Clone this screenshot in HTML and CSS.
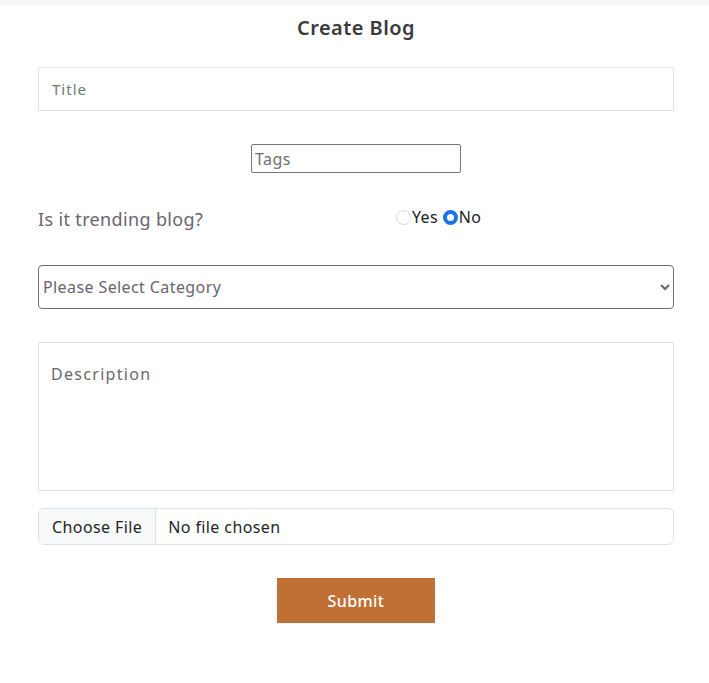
FILE: index.html
```html
<!DOCTYPE html>
<html lang="en">
<head>
<meta charset="utf-8">
<title>Create Blog</title>
<link rel="stylesheet" href="styles.css">
</head>
<body>
<div class="topbar"></div>
<main class="wrap">
  <h1 class="heading">Create Blog</h1>
  <form class="form">
    <input class="field title-field" type="text" placeholder="Title">
    <div class="tags-row">
      <input class="tags-field" type="text" placeholder="Tags">
    </div>
    <div class="trend-row">
      <span class="trend-label">Is it trending blog?</span>
      <div class="radios">
        <label class="radio-item"><input class="radio" type="radio" name="trend" value="yes">Yes</label>
        <label class="radio-item"><input class="radio" type="radio" name="trend" value="no" checked>No</label>
      </div>
    </div>
    <select class="select-field">
      <option>Please Select Category</option>
    </select>
    <textarea class="field desc-field" placeholder="Description"></textarea>
    <input class="file-field" type="file">
    <div class="submit-row">
      <button class="submit-btn" type="button">Submit</button>
    </div>
  </form>
</main>
</body>
</html>
```

FILE: styles.css
```css
* { box-sizing: border-box; }
html, body { margin: 0; padding: 0; background: #fff; }
body { font-family: "Noto Sans", "DejaVu Sans", sans-serif; color: #212529; }

.topbar { height: 5px; background: #f7f7f7; }

.wrap { width: 636px; margin-left: 38px; }

.heading {
  margin: 8px 0 0;
  font-size: 20px;
  line-height: 30px;
  font-weight: 600;
  letter-spacing: 0.45px;
  color: #3a3a3a;
  text-align: center;
}

.form { display: flex; flex-direction: column; margin-top: 24px; }

.field {
  display: block;
  width: 100%;
  border: 1px solid #e2e2e2;
  border-radius: 0;
  font-family: inherit;
  font-size: 15px;
  letter-spacing: 1px;
  color: #333;
  padding: 0 13px;
  outline: none;
  background: #fff;
}
.field::placeholder { color: #6f7a74; }

.title-field { height: 44px; }

.tags-row { display: flex; justify-content: center; margin-top: 33px; }
.tags-field {
  width: 210px;
  height: 29px;
  border: 1px solid #767676;
  border-radius: 2px;
  font-family: inherit;
  font-size: 16px;
  letter-spacing: 0.4px;
  padding: 0 3px;
  outline: none;
}
.tags-field::placeholder { color: #707070; }

.trend-row {
  display: flex;
  align-items: center;
  margin-top: 33px;
  height: 27px;
}
.trend-label {
  width: 358px;
  font-size: 18px;
  line-height: 27px;
  letter-spacing: 0.35px;
  color: #6b6470;
}
.radios { display: flex; align-items: center; margin-top: -5px; font-size: 16px; letter-spacing: 0.3px; color: #222; }
.radio-item { display: flex; align-items: center; }
.radio {
  appearance: none;
  -webkit-appearance: none;
  width: 15px;
  height: 15px;
  margin: 0 1px 0 0;
  border: 1px solid #d9d9d9;
  border-radius: 50%;
  background: #fff;
}
.radio-item + .radio-item .radio { margin-left: 5px; }
.radio:checked {
  border: 4px solid #1a73e8;
  background: #fff;
}

.select-field {
  margin-top: 32px;
  width: 100%;
  height: 44px;
  border: 1px solid #707070;
  border-radius: 4px;
  font-family: inherit;
  font-size: 16px;
  letter-spacing: 0.4px;
  color: #6b6470;
  padding: 0;
  background: #fff;
  outline: none;
}

.desc-field {
  margin-top: 33px;
  height: 149px;
  padding: 20px 12px;
  font-size: 16px;
  letter-spacing: 1.3px;
  resize: none;
}
.desc-field::placeholder { color: #6b6b6b; }

.file-field {
  margin-top: 17px;
  width: 100%;
  height: 37px;
  border: 1px solid #dee2e6;
  border-radius: 6px;
  font-family: inherit;
  font-size: 16px;
  letter-spacing: 0.4px;
  color: #212529;
  line-height: 35px;
  padding: 0;
  overflow: hidden;
}
.file-field::file-selector-button {
  height: 35px;
  margin: 0 12px 0 0;
  padding: 0 13px;
  border: none;
  border-right: 1px solid #dee2e6;
  background: #f8f9fa;
  font-family: inherit;
  font-size: 16px;
  letter-spacing: 0.4px;
  color: #212529;
}

.submit-row { display: flex; justify-content: center; margin-top: 33px; }
.submit-btn {
  width: 158px;
  height: 45px;
  border: none;
  background: #c07034;
  color: #fff;
  font-family: inherit;
  font-size: 16px;
  font-weight: 500;
  letter-spacing: 0.4px;
}
```
